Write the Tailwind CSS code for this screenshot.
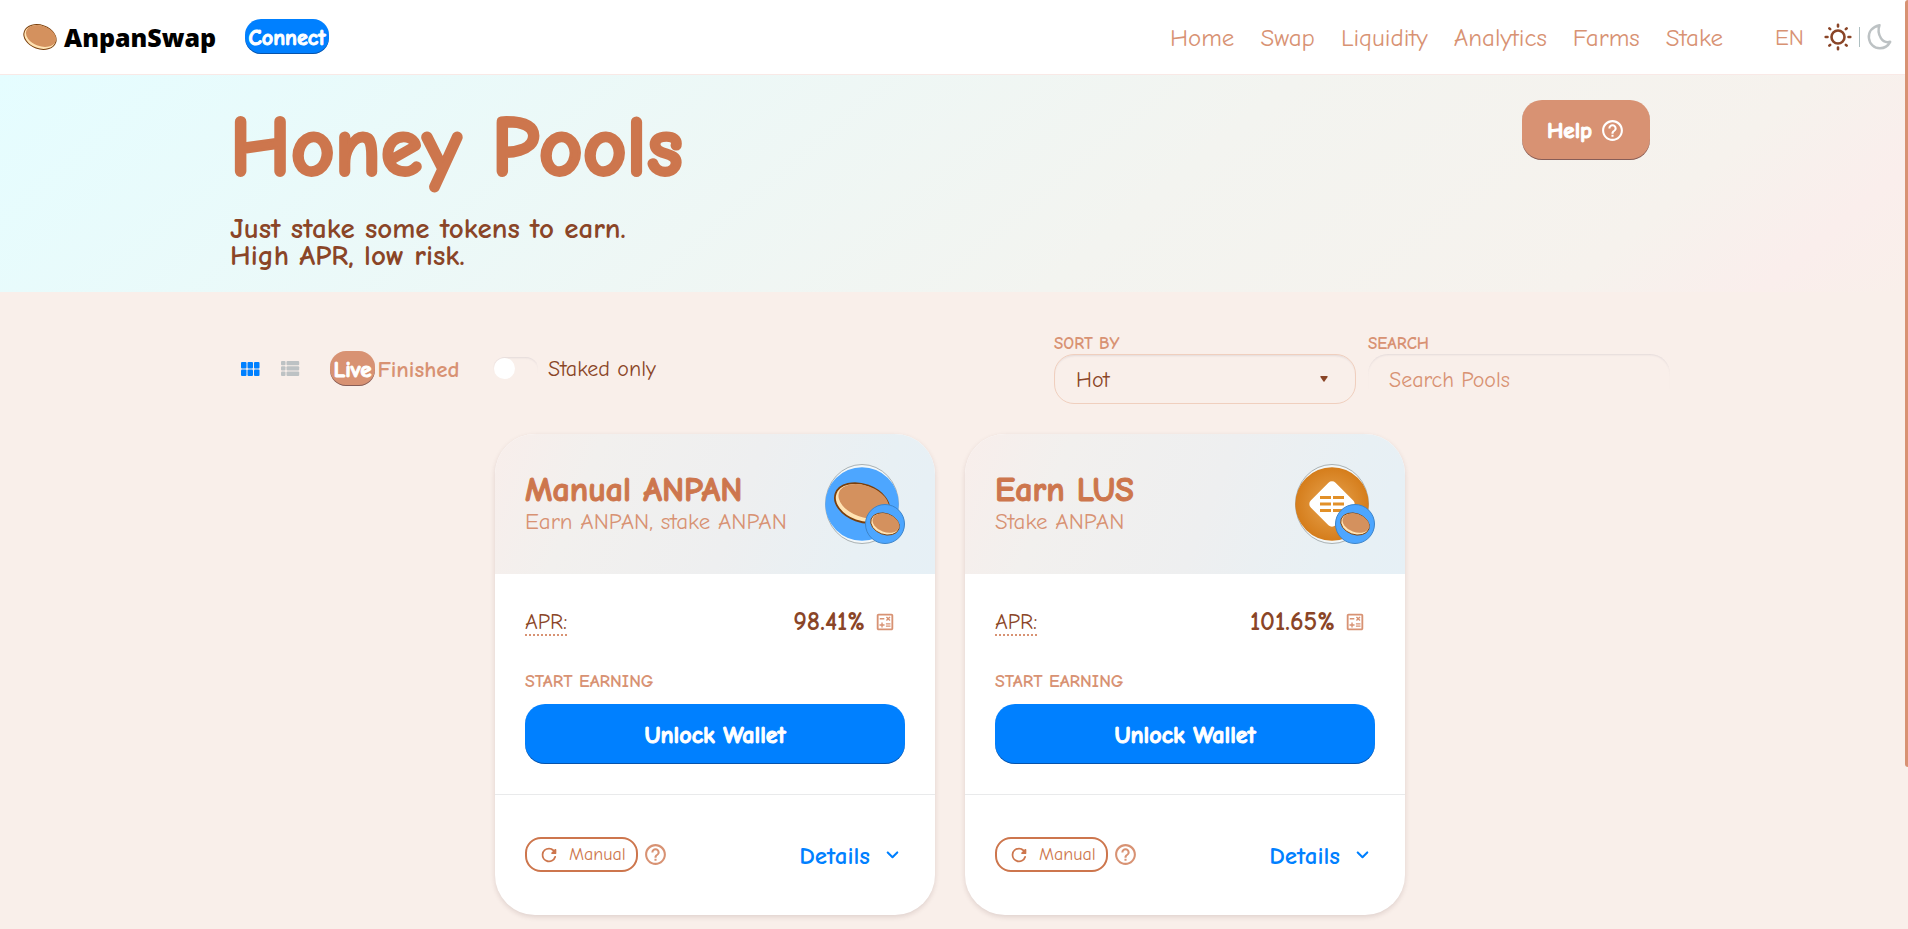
<!DOCTYPE html>
<html lang="en">
<head>
<meta charset="utf-8">
<title>AnpanSwap - Honey Pools</title>
<meta name="viewport" content="width=device-width, initial-scale=1">
<script src="https://cdn.jsdelivr.net/npm/@tailwindcss/browser@4"></script>
</head>
<body class="relative min-h-screen overflow-hidden bg-[#f9efea] font-['Comic_Sans_MS','Comic_Neue',Lato,sans-serif] text-[22px] leading-6 text-[#8a4527]">

<svg class="hidden" aria-hidden="true">
  <symbol id="bun" viewBox="0 0 36 28">
    <g transform="rotate(20 18 14)">
      <ellipse cx="18" cy="14" rx="16.6" ry="11.8" fill="#ffe3b3" stroke="#7a3f0c" stroke-width="1"/>
      <ellipse cx="18.6" cy="12.7" rx="15.6" ry="10.2" fill="#d4915e"/>
    </g>
  </symbol>
  <symbol id="help" viewBox="0 0 24 24"><path fill="currentColor" d="M11 18H13V16H11V18ZM12 2C6.48 2 2 6.48 2 12C2 17.52 6.48 22 12 22C17.52 22 22 17.52 22 12C22 6.48 17.52 2 12 2ZM12 20C7.59 20 4 16.41 4 12C4 7.59 7.59 4 12 4C16.41 4 20 7.59 20 12C20 16.41 16.41 20 12 20ZM12 6C9.79 6 8 7.79 8 10H10C10 8.9 10.9 8 12 8C13.1 8 14 8.9 14 10C14 12 11 11.75 11 15H13C13 12.75 16 12.5 16 10C16 7.79 14.21 6 12 6Z"/></symbol>
  <symbol id="calc" viewBox="0 0 24 24"><path fill="currentColor" d="M19 3H5c-1.1 0-2 .9-2 2v14c0 1.1.9 2 2 2h14c1.1 0 2-.9 2-2V5c0-1.1-.9-2-2-2zm0 16H5V5h14v14zM6.25 7.72h5v1.5h-5zM13 15.75h5v1.5h-5zM13 13.25h5v1.5h-5zM8 18h1.5v-2h2v-1.5h-2v-2H8v2H6V16h2zM14.09 10.95l1.41-1.41 1.41 1.41 1.06-1.06-1.41-1.42 1.41-1.41L16.91 6 15.5 7.41 14.09 6l-1.06 1.06 1.41 1.41-1.41 1.42z"/></symbol>
  <symbol id="refresh" viewBox="0 0 24 24"><path fill="currentColor" d="M17.65 6.35A7.96 7.96 0 0 0 12 4a8 8 0 1 0 7.6 10.5c.3-.8-.1-1.3-.9-1.3-.5 0-.9.3-1.1.8A6 6 0 1 1 12 6c1.66 0 3.14.69 4.22 1.78l-1.5 1.5c-.6.6-.2 1.7.7 1.7H19c.6 0 1-.4 1-1V6.400c0-.9-1.100-1.300-1.700-.7z"/></symbol>
  <symbol id="chevron" viewBox="0 0 24 24"><path fill="currentColor" d="M8.120 9.290L12 13.170l3.880-3.880a.996.996 0 1 1 1.410 1.410l-4.590 4.590a.996.996 0 0 1-1.410 0L6.700 10.700a.996.996 0 0 1 0-1.410c.39-.38 1.030-.39 1.420 0z"/></symbol>
</svg>

<header class="flex h-[75px] items-center border-b border-[#f9e9e6] bg-white pr-4 pb-px pl-[22px]">
  <a href="#" class="flex items-center gap-[6px] font-['Noto_Sans',sans-serif] text-[25px] leading-8 font-black text-black">
    <svg class="h-[28px] w-[36px]"><use href="#bun"/></svg>
    <span class="w-[154px]">AnpanSwap</span>
  </a>
  <button class="ml-[27px] h-[35px] w-[84px] rounded-[16px] bg-[#0080ff] pt-[2px] text-[22px] font-bold text-white shadow-[inset_0_-1px_0_rgba(14,14,44,0.4)] [-webkit-text-stroke:1px]">Connect</button>
  <nav class="ml-auto flex gap-[26px] pt-[2px] text-[25px] leading-8 text-[#d89273]">
    <a href="#">Home</a><a href="#">Swap</a><a href="#">Liquidity</a><a href="#">Analytics</a><a href="#">Farms</a><a href="#">Stake</a>
  </nav>
  <button class="ml-[52px] pt-[2px] text-[23px] text-[#d89273]">EN</button>
  <button aria-label="Toggle theme" class="ml-[20px] flex items-center gap-[7px]">
    <svg class="h-[28px] w-[28px]" viewBox="0 0 28 28" fill="none" stroke="#8a4527" stroke-linecap="round"><circle cx="14" cy="14" r="6.500" stroke-width="2.600"/><path stroke-width="2.600" d="M14 1.700v1.800M14 24.500v1.800M1.700 14h1.800M24.500 14h1.800M5.300 5.300l.9.9M21.800 21.800l.9.9M5.300 22.700l.9-.9M21.800 6.200l.9-.9"/></svg>
    <span class="h-[20px] w-px bg-[#aebfc1]"></span>
    <svg class="h-[27px] w-[25px]" viewBox="0 0 25 27" fill="none" stroke="#bdc2c4" stroke-width="2.500" stroke-linejoin="round"><path d="M12.500 2.200C5 4 1.300 9 1.900 15c.6 6 5.300 10.200 11 10.200 4.600 0 8.200-2.400 10.300-6.400-4 1-7.200-.3-9.300-3.700-2.600-4-2.900-8.600-1.400-12.900z"/></svg>
  </button>
</header>

<section class="bg-[linear-gradient(140deg,#e5fdff_0%,#f3f4f0_60%,#f6f2ed_84%,#faeeec_93%,#f9efea_100%)] pr-2">
  <div class="mx-auto flex h-[217px] max-w-[1440px] items-start justify-between pr-5 pt-[25px]">
    <div>
      <h1 class="text-[85px] leading-[94px] font-bold text-[#cd764d] [-webkit-text-stroke:3px]">Honey Pools</h1>
      <p class="mt-[21px] text-[29px] leading-[27px] font-bold">Just stake some tokens to earn.<br>High APR, low risk.</p>
    </div>
    <button class="flex h-[60px] w-[128px] items-center justify-center gap-2 rounded-[20px] bg-[#d89273] text-[23px] font-bold text-white shadow-[inset_0_-1px_0_rgba(14,14,44,0.4)]"><span class="pt-[2px] [-webkit-text-stroke:1px]">Help</span><svg class="h-[25px] w-[25px]"><use href="#help"/></svg></button>
  </div>
</section>

<main class="pr-2">
  <div class="mx-auto flex max-w-[1440px] items-end pt-[40px]">
    <div class="mb-[18px] flex h-[35px] items-center pl-[11px]">
      <button aria-label="Card view"><svg class="h-[14px] w-[19px]" viewBox="0 0 19 14" fill="#0080ff"><rect width="5.500" height="6.500" rx="1"/><rect x="6.500" width="5.500" height="6.500" rx="1"/><rect x="13" width="5.500" height="6.500" rx="1"/><rect y="7.500" width="5.500" height="6.500" rx="1"/><rect x="6.500" y="7.500" width="5.500" height="6.500" rx="1"/><rect x="13" y="7.500" width="5.500" height="6.500" rx="1"/></svg></button>
      <button aria-label="Table view" class="ml-[21px]"><svg class="h-[15px] w-[19px]" viewBox="0 0 19 15" fill="#bdc2c4"><rect width="4.500" height="4.300" rx="1"/><rect y="5.300" width="4.500" height="4.300" rx="1"/><rect y="10.600" width="4.500" height="4.300" rx="1"/><rect x="5.500" width="12.700" height="4.300" rx="1"/><rect x="5.500" y="5.300" width="12.700" height="4.300" rx="1"/><rect x="5.500" y="10.600" width="12.700" height="4.300" rx="1"/></svg></button>
      <button class="ml-[30px] h-[35px] w-[45px] rounded-[16px] bg-[#d89273] pt-[2px] text-[23px] font-bold text-white shadow-[inset_0_-1px_0_rgba(14,14,44,0.4)] [-webkit-text-stroke:1px]">Live</button>
      <button class="ml-[2px] w-[83px] pt-[2px] text-[23px] font-bold text-[#d89273]">Finished</button>
      <label class="ml-[33px] flex items-center gap-[10px] whitespace-nowrap">
        <span class="flex h-[24px] w-[45px] items-center rounded-full px-px shadow-[inset_0_2px_2px_-1px_rgba(74,74,104,0.12)]"><input type="checkbox" class="h-[21px] w-[21px] appearance-none rounded-full bg-white"></span>
        <span>Staked only</span>
      </label>
    </div>
    <div class="ml-auto w-[302px]">
      <label for="sort" class="block pt-px text-[17px] leading-[21px] font-bold text-[#d89273]">SORT BY</label>
      <div class="relative">
        <select id="sort" class="block h-[50px] w-full appearance-none rounded-[20px] border border-[#f0cfbe] bg-transparent px-[21px] pt-[2px] shadow-[inset_0_2px_2px_-1px_rgba(74,74,104,0.12)]"><option>Hot</option><option>APR</option><option>Earned</option><option>Total staked</option></select>
        <svg class="pointer-events-none absolute top-[22px] right-[28px] h-[6px] w-[8px]" viewBox="0 0 8 6" fill="#8a4527"><path d="M1 0h6q1 0 .6 1L4.500 5.500q-.5.600-1 0L.4 1Q0 0 1 0z"/></svg>
      </div>
    </div>
    <div class="ml-3 w-[302px]">
      <label for="search" class="block pt-px text-[17px] leading-[21px] font-bold text-[#d89273]">SEARCH</label>
      <input id="search" type="text" placeholder="Search Pools" class="block h-[50px] w-full rounded-[20px] bg-transparent px-[21px] pt-[2px] shadow-[inset_0_2px_2px_-1px_rgba(74,74,104,0.12)] placeholder:text-[#d89273]">
    </div>
  </div>

  <div class="mt-[30px] flex flex-wrap justify-center gap-[30px] pb-12">
    <article class="w-[440px] overflow-hidden rounded-[40px] bg-white shadow-[0_2px_5px_rgba(80,40,40,0.15)]">
      <div class="flex h-[140px] items-center justify-between bg-[linear-gradient(112deg,#f8eeeb_0%,#f2f0ee_22%,#eeeff0_55%,#e8f0f4_82%,#e6f0f6_100%)] px-[30px]">
        <div>
          <h2 class="text-[34px] leading-[35px] font-bold text-[#cd764d] [-webkit-text-stroke:1px]">Manual ANPAN</h2>
          <p class="text-[23px] leading-7 whitespace-nowrap text-[#d89273]">Earn ANPAN, stake ANPAN</p>
        </div>
        <svg class="h-[80px] w-[80px]" viewBox="0 0 80 80">
          <ellipse cx="37" cy="40" rx="36.500" ry="39.500" fill="#f2f7f9" stroke="#a9b0b2"/><circle cx="37" cy="40" r="36.700" fill="#4da6ff"/>
          <g transform="rotate(20 37 39)"><ellipse cx="37" cy="39" rx="28" ry="18.500" fill="#ffe3b3" stroke="#7a3f0c" stroke-width="1.800"/><ellipse cx="38" cy="36.800" rx="26.200" ry="15.800" fill="#d4915e"/></g>
          <circle cx="60" cy="60" r="19.500" fill="#4da6ff" stroke="#3d84c8"/><use href="#bun" x="44" y="47.500" width="32" height="25"/>
        </svg>
      </div>
      <div class="px-[30px] pt-[34px] pb-[30px]">
        <div class="flex items-center">
          <span class="border-b-2 border-dotted border-[#d89273] pt-[2px] leading-[23px]">APR:</span>
          <span class="ml-auto text-[26px] leading-[28px] font-bold">98.41%</span>
          <button aria-label="ROI calculator" class="mr-[9px] ml-[9px] text-[#d89273]"><svg class="h-[22px] w-[22px]"><use href="#calc"/></svg></button>
        </div>
        <p class="mt-[34px] text-[18px] leading-6 font-bold text-[#d89273]">START EARNING</p>
        <button class="mt-[10px] h-[60px] w-full rounded-[20px] bg-[#0080ff] pt-[2px] text-[24px] font-bold text-white shadow-[inset_0_-1px_0_rgba(14,14,44,0.4)] [-webkit-text-stroke:1px]">Unlock Wallet</button>
      </div>
      <div class="flex h-[121px] items-center border-t border-[#e9eaeb] px-[30px] pb-px">
        <span class="flex h-[35px] w-[113px] items-center gap-[9px] rounded-[16px] border-2 border-[#cd764d] pl-[11px] text-[18px] text-[#cd764d]"><svg class="h-[22px] w-[22px]"><use href="#refresh"/></svg>Manual</span>
        <button aria-label="About manual compounding" class="ml-[5px] text-[#d89273]"><svg class="h-[25px] w-[25px]"><use href="#help"/></svg></button>
        <button class="ml-auto flex items-center gap-[10px] text-[25px] font-bold text-[#0080ff]"><span class="pt-[3px]">Details</span><svg class="h-[25px] w-[25px]"><use href="#chevron"/></svg></button>
      </div>
    </article>

    <article class="w-[440px] overflow-hidden rounded-[40px] bg-white shadow-[0_2px_5px_rgba(80,40,40,0.15)]">
      <div class="flex h-[140px] items-center justify-between bg-[linear-gradient(112deg,#f8eeeb_0%,#f2f0ee_22%,#eeeff0_55%,#e8f0f4_82%,#e6f0f6_100%)] px-[30px]">
        <div>
          <h2 class="text-[34px] leading-[35px] font-bold text-[#cd764d] [-webkit-text-stroke:1px]">Earn LUS</h2>
          <p class="text-[23px] leading-7 whitespace-nowrap text-[#d89273]">Stake ANPAN</p>
        </div>
        <svg class="h-[80px] w-[80px]" viewBox="0 0 80 80">
          <defs><radialGradient id="gold"><stop offset="0" stop-color="#e8a552"/><stop offset="1" stop-color="#d57d1b"/></radialGradient></defs>
          <ellipse cx="37" cy="40" rx="36.500" ry="39.500" fill="#f2f7f9" stroke="#a9b0b2"/><circle cx="37" cy="40" r="36.700" fill="url(#gold)"/>
          <rect x="19.500" y="22.500" width="35" height="35" rx="5" fill="#fff" transform="rotate(45 37 40)"/>
          <path fill="#e29028" d="M25 32h11v3H25zM38 32h11v3H38zM25 38.500h11v3H25zM38 38.500h11v3H38zM25 45h11v3H25zM38 45h11v3H38z"/>
          <circle cx="60" cy="60" r="19.500" fill="#4da6ff" stroke="#3d84c8"/><use href="#bun" x="44" y="47.500" width="32" height="25"/>
        </svg>
      </div>
      <div class="px-[30px] pt-[34px] pb-[30px]">
        <div class="flex items-center">
          <span class="border-b-2 border-dotted border-[#d89273] pt-[2px] leading-[23px]">APR:</span>
          <span class="ml-auto text-[26px] leading-[28px] font-bold">101.65%</span>
          <button aria-label="ROI calculator" class="mr-[9px] ml-[9px] text-[#d89273]"><svg class="h-[22px] w-[22px]"><use href="#calc"/></svg></button>
        </div>
        <p class="mt-[34px] text-[18px] leading-6 font-bold text-[#d89273]">START EARNING</p>
        <button class="mt-[10px] h-[60px] w-full rounded-[20px] bg-[#0080ff] pt-[2px] text-[24px] font-bold text-white shadow-[inset_0_-1px_0_rgba(14,14,44,0.4)] [-webkit-text-stroke:1px]">Unlock Wallet</button>
      </div>
      <div class="flex h-[121px] items-center border-t border-[#e9eaeb] px-[30px] pb-px">
        <span class="flex h-[35px] w-[113px] items-center gap-[9px] rounded-[16px] border-2 border-[#cd764d] pl-[11px] text-[18px] text-[#cd764d]"><svg class="h-[22px] w-[22px]"><use href="#refresh"/></svg>Manual</span>
        <button aria-label="About manual compounding" class="ml-[5px] text-[#d89273]"><svg class="h-[25px] w-[25px]"><use href="#help"/></svg></button>
        <button class="ml-auto flex items-center gap-[10px] text-[25px] font-bold text-[#0080ff]"><span class="pt-[3px]">Details</span><svg class="h-[25px] w-[25px]"><use href="#chevron"/></svg></button>
      </div>
    </article>
  </div>
</main>

<div aria-hidden="true" class="absolute top-0 right-0 h-[767px] w-[3px] rounded-l-full bg-[#d89273]"></div>
</body>
</html>
